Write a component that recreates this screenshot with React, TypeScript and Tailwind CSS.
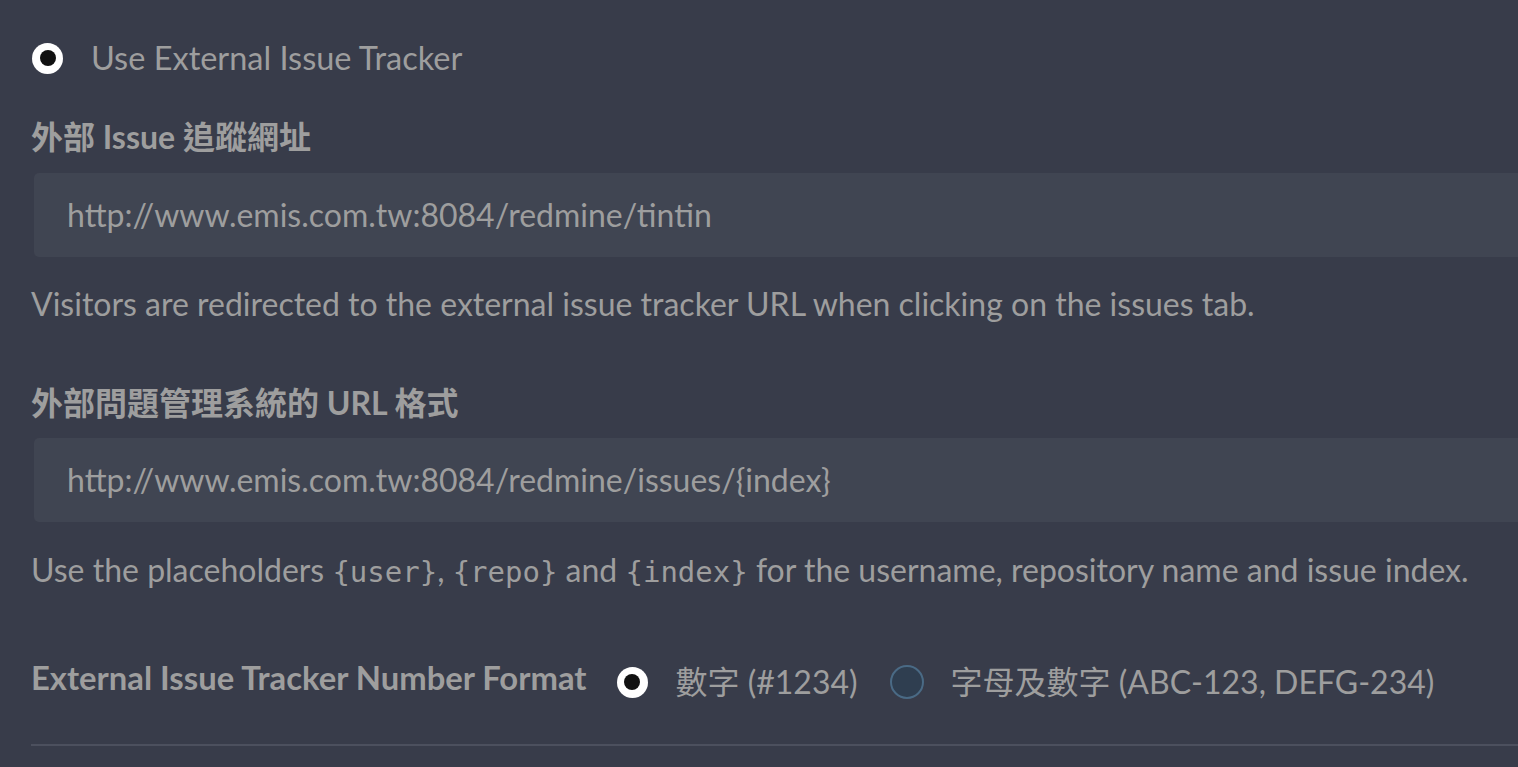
import React from "react";

const font = { fontFamily: "Lato, 'Noto Sans CJK TC', sans-serif" };
const mono = { fontFamily: "'DejaVu Sans Mono', monospace" };

function Radio({ checked }: { checked: boolean }) {
  return checked ? (
    <span className="flex h-[31px] w-[31px] shrink-0 items-center justify-center rounded-full bg-white">
      <span className="block h-[16px] w-[16px] rounded-full bg-[#111]" />
    </span>
  ) : (
    <span className="block h-[34px] w-[34px] shrink-0 rounded-full border-2 border-[#4a6a85] bg-[#2f3e50]" />
  );
}

export default function App() {
  return (
    <div
      className="h-screen w-full overflow-hidden bg-[#383c4a] text-[#9e9e9e]"
      style={font}
    >
      <div className="w-[1600px] pl-[31px]">
        <div className="mt-[43px] flex h-[30px] items-center">
          <span className="ml-[1px] block">
            <Radio checked />
          </span>
          <span className="ml-[28px] text-[32.5px] leading-[36px]">Use External Issue Tracker</span>
        </div>

        <div className="mt-[46px] text-[32px] font-bold leading-[36px]">外部 Issue 追蹤網址</div>
        <div className="ml-[3px] mt-[18px] flex h-[84px] items-center rounded-[5px] bg-[#404552] pl-[33px] text-[32px]">
          http://www.emis.com.tw:8084/redmine/tintin
        </div>
        <div className="mt-[29px] text-[32px] leading-[36px]">
          Visitors are redirected to the external issue tracker URL when clicking on the issues tab.
        </div>

        <div className="mt-[63px] text-[32px] font-bold leading-[36px]">外部問題管理系統的 URL 格式</div>
        <div className="ml-[3px] mt-[17px] flex h-[84px] items-center rounded-[5px] bg-[#404552] pl-[33px] text-[32px]">
          http://www.emis.com.tw:8084/redmine/issues/{"{index}"}
        </div>
        <div className="mt-[30px] text-[32px] leading-[36px]">
          Use the placeholders{" "}
          <code style={mono} className="text-[29px]">
            {"{user}"}
          </code>
          ,{" "}
          <code style={mono} className="text-[29px]">
            {"{repo}"}
          </code>{" "}
          and{" "}
          <code style={mono} className="text-[29px]">
            {"{index}"}
          </code>{" "}
          for the username, repository name and issue index.
        </div>

        <div className="mt-[74px] flex h-[36px] items-center">
          <span className="-mt-[8px] text-[32.8px] font-bold leading-[36px]">External Issue Tracker Number Format</span>
          <span className="ml-[30px] block">
            <Radio checked />
          </span>
          <span className="ml-[28px] text-[32px] leading-[36px]">數字 (#1234)</span>
          <span className="ml-[32px] block">
            <Radio checked={false} />
          </span>
          <span className="ml-[27px] text-[32px] leading-[36px]">字母及數字 (ABC-123, DEFG-234)</span>
        </div>

        <div className="mt-[44px] h-[2px] bg-[#4c505e]" />
      </div>
    </div>
  );
}
